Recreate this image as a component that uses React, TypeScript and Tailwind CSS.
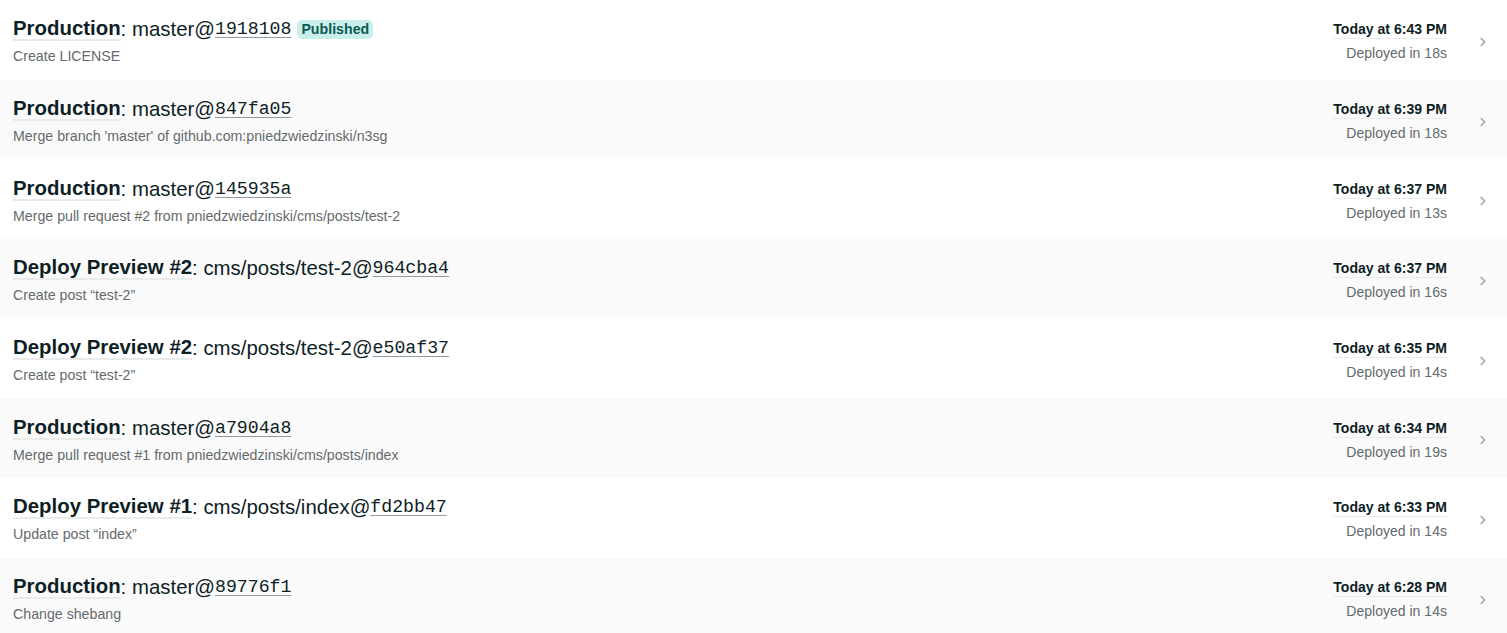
import { ChevronRight } from "lucide-react";

type Deploy = {
  context: string;
  branch: string;
  sha: string;
  message: string;
  time: string;
  duration: string;
  published?: boolean;
};

const deploys: Deploy[] = [
  { context: "Production", branch: "master", sha: "1918108", message: "Create LICENSE", time: "Today at 6:43 PM", duration: "18s", published: true },
  { context: "Production", branch: "master", sha: "847fa05", message: "Merge branch 'master' of github.com:pniedzwiedzinski/n3sg", time: "Today at 6:39 PM", duration: "18s" },
  { context: "Production", branch: "master", sha: "145935a", message: "Merge pull request #2 from pniedzwiedzinski/cms/posts/test-2", time: "Today at 6:37 PM", duration: "13s" },
  { context: "Deploy Preview #2", branch: "cms/posts/test-2", sha: "964cba4", message: "Create post \u201ctest-2\u201d", time: "Today at 6:37 PM", duration: "16s" },
  { context: "Deploy Preview #2", branch: "cms/posts/test-2", sha: "e50af37", message: "Create post \u201ctest-2\u201d", time: "Today at 6:35 PM", duration: "14s" },
  { context: "Production", branch: "master", sha: "a7904a8", message: "Merge pull request #1 from pniedzwiedzinski/cms/posts/index", time: "Today at 6:34 PM", duration: "19s" },
  { context: "Deploy Preview #1", branch: "cms/posts/index", sha: "fd2bb47", message: "Update post \u201cindex\u201d", time: "Today at 6:33 PM", duration: "14s" },
  { context: "Production", branch: "master", sha: "89776f1", message: "Change shebang", time: "Today at 6:28 PM", duration: "14s" },
];

function DeployRow({ deploy, striped }: { deploy: Deploy; striped: boolean }) {
  return (
    <li className={`flex h-[79.7px] items-center pl-[13px] pr-[17px] pt-[4px] ${striped ? "bg-[#fafafa]" : "bg-white"}`}>
      <div className="min-w-0 flex-1">
        <h2 className="flex items-center text-[20.4px] leading-6 text-[#0e1e25]">
          <span className="border-b-2 border-[#e9ebeb] font-bold leading-[22px]">{deploy.context}</span>
          <span>: {deploy.branch}@</span>
          <span className="font-['Liberation_Mono',monospace] text-[18.2px] underline decoration-[#949a9f] decoration-1 underline-offset-[3px]">
            {deploy.sha}
          </span>
          {deploy.published ? (
            <span className="ml-[6px] rounded-[5px] bg-[#c9efea] px-[4px] text-[14.2px] font-bold leading-[19px] text-[#0c5a56]">
              Published
            </span>
          ) : null}
        </h2>
        <p className="mt-[5px] text-[14.2px] leading-5 text-[#646a6e]">{deploy.message}</p>
      </div>
      <div className="flex flex-col items-end gap-1 text-[14.05px] leading-5">
        <span className="border-b border-[#e9ebeb] font-bold leading-[18px] text-[#0e1e25]">{deploy.time}</span>
        <span className="text-[#646a6e]">Deployed in {deploy.duration}</span>
      </div>
      <ChevronRight aria-hidden className="ml-[29px] size-[14px] text-[#a3a8ab]" strokeWidth={3} />
    </li>
  );
}

export default function App() {
  return (
    <main className="min-h-screen bg-white font-['Liberation_Sans',Arial,sans-serif]">
      <ul>
        {deploys.map((deploy, index) => (
          <DeployRow key={deploy.sha} deploy={deploy} striped={index % 2 === 1} />
        ))}
      </ul>
    </main>
  );
}
